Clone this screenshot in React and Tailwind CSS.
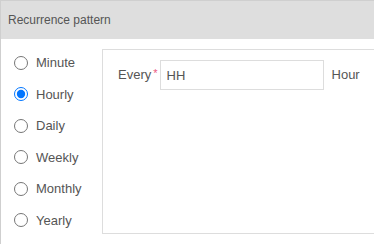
export default function App() {
  const options = ['Minute', 'Hourly', 'Daily', 'Weekly', 'Monthly', 'Yearly']

  return (
    <div className="w-[374px] h-[244px] overflow-hidden bg-white" style={{ fontFamily: '"Liberation Sans", Arial, sans-serif' }}>
      <div className="border-t border-l border-[#cfcfcf] h-full">
        {/* Header */}
        <div className="h-[38px] bg-[#dedede] flex items-center pl-[7px] text-[12px] text-[#555]">
          Recurrence pattern
        </div>

        <div className="flex">
          {/* Radio list */}
          <div className="w-[101px] shrink-0 pt-[8px]">
            {options.map((opt) => (
              <label key={opt} className="flex items-center h-[31.5px] pl-[13px] text-[13px] text-[#555]">
                <input
                  type="radio"
                  name="pattern"
                  defaultChecked={opt === 'Hourly'}
                  className="w-[14px] h-[14px] m-0"
                />
                <span className="ml-[8px]">{opt}</span>
              </label>
            ))}
          </div>

          {/* Detail panel */}
          <div className="flex-1 mt-[10px] h-[185px] border border-r-0 border-[#dddddd] pt-[10px] pl-[15px]">
            <div className="flex items-center text-[13px] text-[#555]">
              <span>Every</span>
              <span className="text-[#ec5a7f] text-[11px] ml-[2px] -mt-[4px]">*</span>
              <input
                type="text"
                placeholder="HH"
                className="ml-[2px] w-[164px] h-[30px] border border-[#dddddd] px-[6px] text-[13px] text-[#555] placeholder:text-[#555] outline-none"
              />
              <span className="ml-[8px]">Hour</span>
            </div>
          </div>
        </div>
      </div>
    </div>
  )
}
